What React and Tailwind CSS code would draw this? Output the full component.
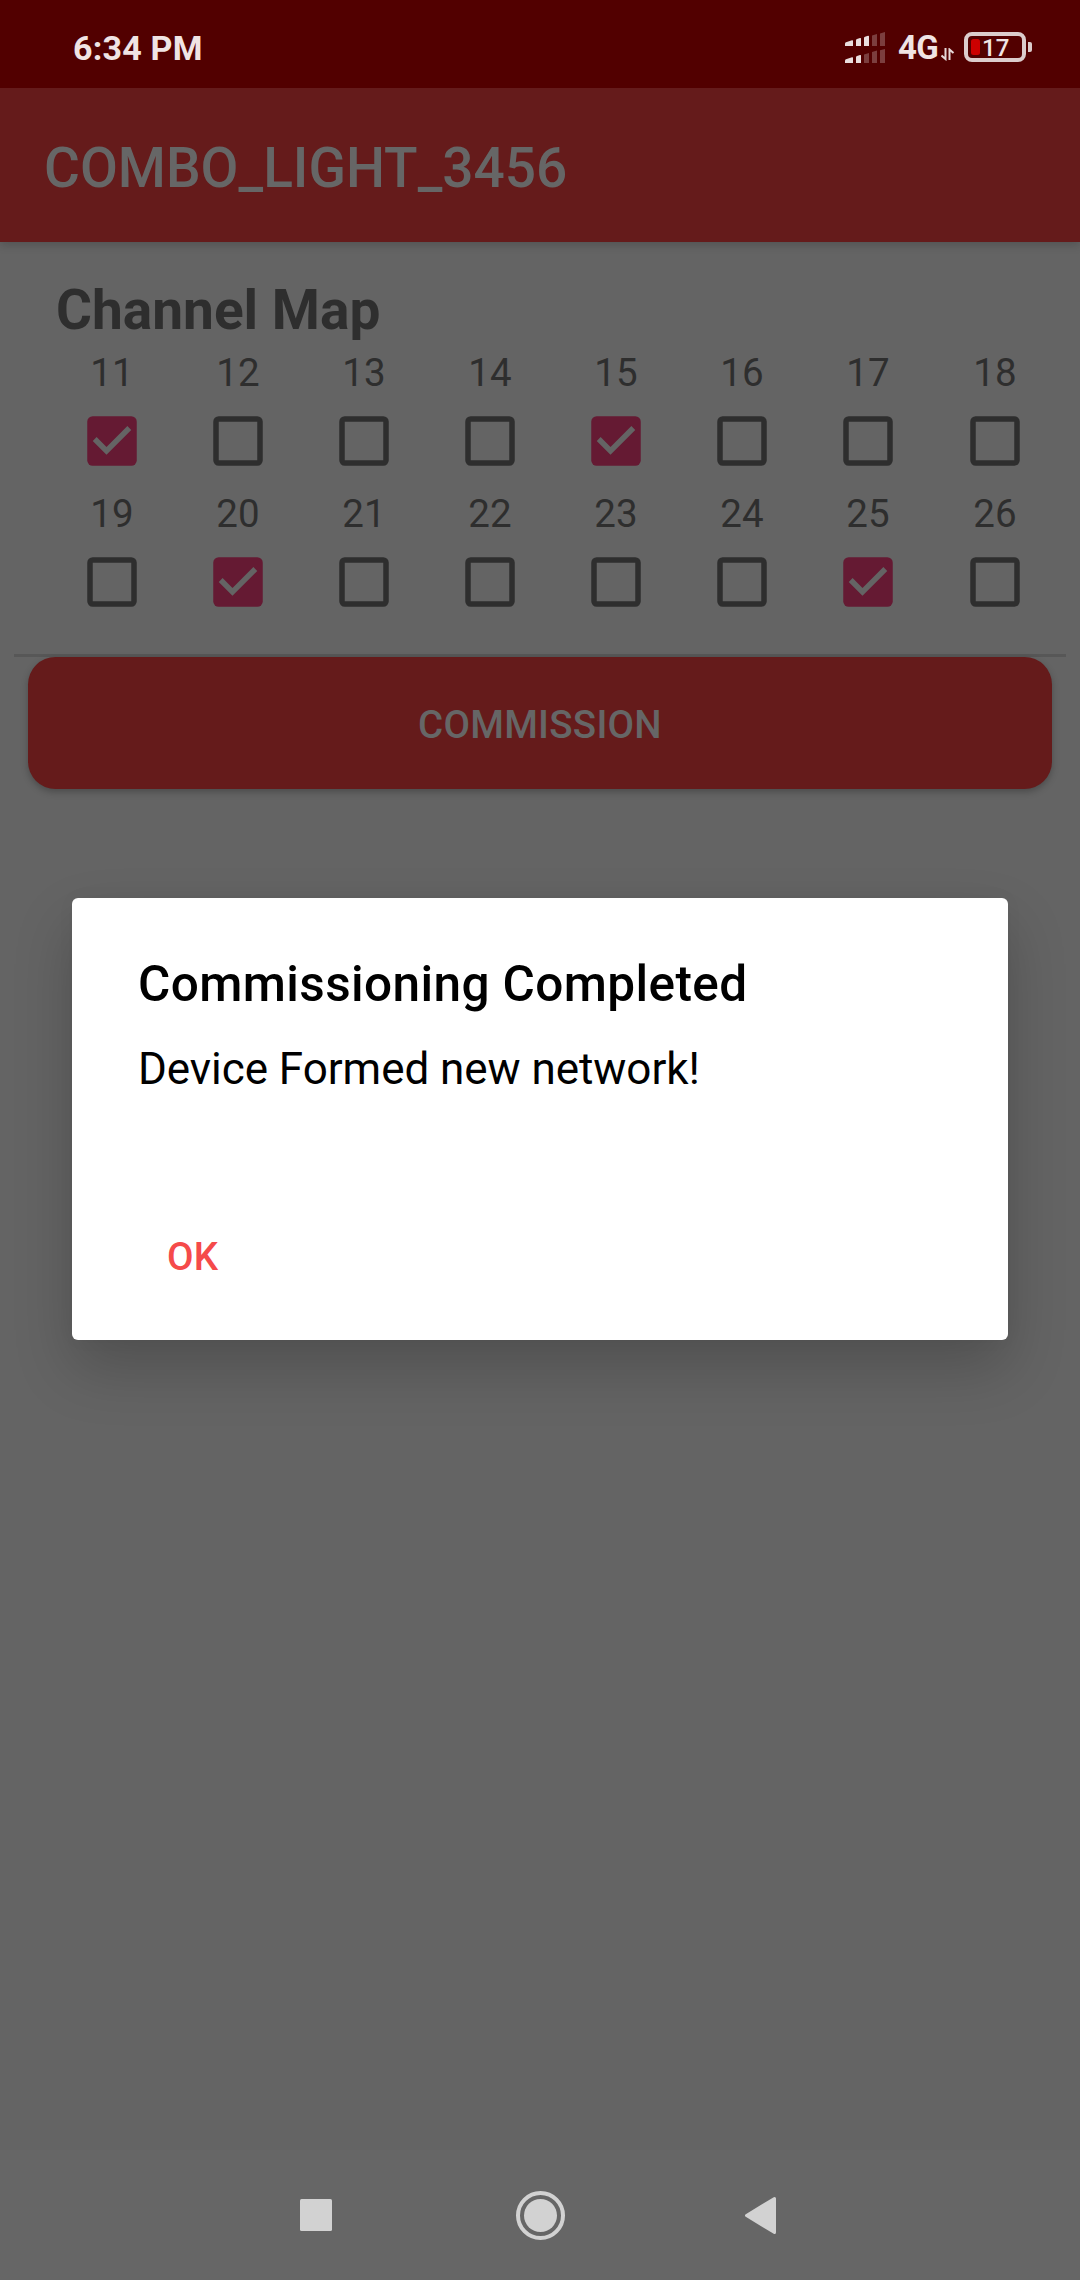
const channels = [11, 12, 13, 14, 15, 16, 17, 18, 19, 20, 21, 22, 23, 24, 25, 26];
const selected = new Set([11, 15, 20, 25]);

function SignalIcon() {
  return (
    <svg width="40" height="32" viewBox="0 0 40 32" fill="#eadede" className="mt-[32px] ml-[845px] shrink-0">
      <path d="M0 11.5Q0 10.6 1 10.2L7 8.3Q8 8 8 9V14H0Z" />
      <path d="M11 8.2Q11 7.4 12 7L15 6Q16 5.700 16 6.700V14H11Z" />
      <path d="M19 5.800Q19 5 20 4.700L23 3.800Q24 3.500 24 4.500V14H19Z" />
      <path opacity=".28" d="M27 3.600L32 2V14H27ZM35 1.400L40 0V14H35Z" />
      <path d="M0 28.500Q0 27.600 1 27.200L7 25.300Q8 25 8 26V31H0Z" />
      <path d="M11 25.200Q11 24.400 12 24L15 23Q16 22.700 16 23.700V31H11Z" />
      <path opacity=".28" d="M19 22.600L24 21V31H19ZM27 20L32 18.500V31H27ZM35 18.200L40 17V31H35Z" />
    </svg>
  );
}

function StatusBar() {
  return (
    <div className="relative h-[88px] bg-[#520000] text-[#f0e4e4]">
      <div className="flex h-full items-start">
        <SignalIcon />
        <span className="mt-[28px] ml-[13px] w-[42px] text-[33px] leading-[40px] font-bold tracking-[-0.8px]">4G</span>
        <svg width="14" height="13" viewBox="0 0 14 13" className="mt-[48px] ml-[1px] shrink-0 fill-none stroke-[#e6d8d8]" strokeWidth="2">
          <path d="M4.500 0V11L0.500 7.500M8.500 12V1.500L12.500 5" />
        </svg>
        <div className="mt-[32px] ml-[9px] flex h-[30px] w-[62px] shrink-0 items-center rounded-[8px] border-4 border-[#dccccc] pl-[3px]">
          <span className="h-[16px] w-[9px] rounded-[2.500px] bg-[#cc0000]" />
          <span className="mt-px ml-[2px] text-[24px] leading-[24px] font-medium">17</span>
        </div>
        <span className="mt-[42px] ml-[2px] h-[10px] w-[4px] rounded-r-[2px] bg-[#dccccc]" />
      </div>
      <span className="absolute top-[28px] left-[73px] text-[34px] leading-[40px] font-bold tracking-[0.2px]">6:34 PM</span>
    </div>
  );
}

function Checkbox({ checked }) {
  return (
    <svg width="66" height="66" viewBox="0 0 24 24" className="block">
      {checked ? (
        <>
          <rect x="3" y="3" width="18" height="18" rx="2" fill="#651a33" />
          <path d="M10 17l-5-5 1.410-1.410L10 14.170l7.590-7.590L19 8z" fill="#646464" />
        </>
      ) : (
        <rect x="4" y="4" width="16" height="16" rx="1" fill="none" stroke="#2e2e2e" strokeWidth="2" />
      )}
    </svg>
  );
}

function Channel({ number }) {
  return (
    <div className="flex h-[141px] flex-col items-center">
      <span className="text-[38.500px] leading-[45px]">{number}</span>
      <div className="mt-[13px]">
        <Checkbox checked={selected.has(number)} />
      </div>
    </div>
  );
}

function NavBar() {
  return (
    <div className="h-[130px] bg-[#666666]">
      <svg width="1080" height="130" viewBox="0 0 1080 130" fill="#d2d2d2" className="block">
        <rect x="300" y="49" width="32" height="32" rx="1.500" />
        <circle cx="540.500" cy="65.500" r="22.500" fill="none" stroke="#d2d2d2" strokeWidth="4" />
        <circle cx="540.500" cy="65.500" r="16.500" />
        <path d="M746.500 65.500L774.500 48.500V82.500Z" stroke="#d2d2d2" strokeWidth="3" strokeLinejoin="round" />
      </svg>
    </div>
  );
}

function Dialog() {
  return (
    <div className="absolute top-[898px] left-[72px] flex h-[442px] w-[936px] flex-col items-start rounded-[6px] bg-white px-[66px] text-black shadow-[0_28px_60px_rgba(0,0,0,0.2),0_0_20px_rgba(0,0,0,0.03)]">
      <h2 className="mt-[56px] text-[49.500px] leading-[60px] font-medium tracking-[0.4px]">Commissioning Completed</h2>
      <p className="mt-[29px] text-[44px] leading-[52px] tracking-[-0.05px]">Device Formed new network!</p>
      <button className="mt-[139px] ml-[29px] text-[38.500px] leading-[46px] font-medium tracking-[0.3px] text-[#f54a4a]">OK</button>
    </div>
  );
}

export default function App() {
  return (
    <div className="relative flex h-[2280px] w-[1080px] flex-col overflow-hidden bg-[#646464] font-[Roboto,sans-serif] text-[#2e2e2e]">
      <StatusBar />
      <header className="flex h-[154px] items-center bg-[#651b1b] pl-[44px] shadow-[0_3px_9px_rgba(0,0,0,0.18)]">
        <h1 className="mt-[5px] text-[55px] leading-[64px] font-medium text-[#666666]">COMBO_LIGHT_3456</h1>
      </header>
      <main className="flex-1">
        <h2 className="mt-[35px] ml-[56px] text-[55px] leading-[66px] font-bold">Channel Map</h2>
        <div className="mt-[7px] ml-[49px] grid w-[1010px] grid-cols-[repeat(7,126px)_128px]">
          {channels.map((number) => (
            <Channel key={number} number={number} />
          ))}
        </div>
        <div className="mx-[14px] mt-[22px] h-[3px] bg-[#575757]" />
        <button className="mx-[28px] flex h-[132px] w-[1024px] items-center justify-center rounded-[27.500px] bg-[#651b1b] text-[38.500px] font-medium text-[#666666] shadow-[0_3px_7px_rgba(0,0,0,0.25)]">
          <span className="mt-[3px] tracking-[0.25px]">COMMISSION</span>
        </button>
      </main>
      <NavBar />
      <Dialog />
    </div>
  );
}
